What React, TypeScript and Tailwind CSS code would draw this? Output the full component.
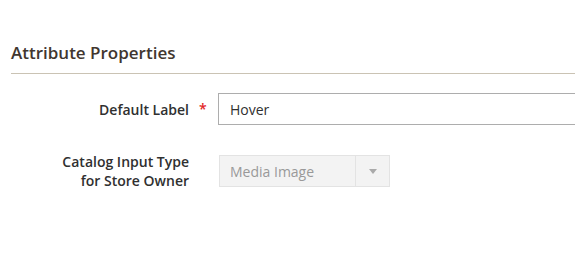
export default function App() {
  return (
    <div className="w-[575px] h-[274px] bg-white overflow-hidden" style={{ fontFamily: '"Open Sans", sans-serif' }}>
      <div className="pt-[41px] pl-[11px]">
        <h2 className="text-[17px] leading-[24px] font-semibold text-[#41362f] pb-[8px] border-b border-[#cac3b4]">
          Attribute Properties
        </h2>
      </div>
      <div className="flex items-center mt-[19px] h-[32px]">
        <div className="w-[189px] text-right text-[14px] font-semibold text-[#303030]">Default Label</div>
        <div className="w-[29px] pl-[10px] text-[#e22626] text-[14px] font-semibold leading-none">*</div>
        <div className="flex-1 min-w-0 h-[32px] border border-[#adadad] border-r-0 flex items-center pl-[11px] text-[14px] text-[#303030]">
          Hover
        </div>
      </div>
      <div className="flex items-center mt-[30px] h-[32px]">
        <div className="w-[189px] text-right text-[14px] leading-[19px] font-semibold text-[#303030]">
          Catalog Input Type
          <br />
          for Store Owner
        </div>
        <div className="w-[30px]" />
        <div className="w-[171px] h-[32px] border border-[#e3e3e3] bg-[#f3f3f3] flex">
          <div className="flex-1 flex items-center pl-[10px] text-[14px] text-[#999999]">Media Image</div>
          <div className="w-[34px] border-l border-[#e3e3e3] flex items-center justify-center">
            <div className="w-0 h-0 border-l-[4px] border-r-[4px] border-t-[5px] border-l-transparent border-r-transparent border-t-[#aaaaaa]" />
          </div>
        </div>
      </div>
    </div>
  );
}
